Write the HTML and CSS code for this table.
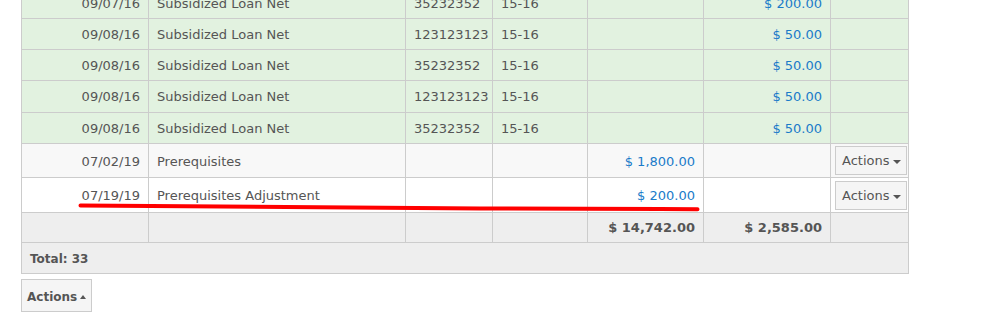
FILE: index.html
```html
<!DOCTYPE html>
<html>
<head>
<meta charset="utf-8">
<link rel="stylesheet" href="styles.css">
</head>
<body>
<div class="page">
  <table class="ledger">
    <colgroup>
      <col class="c-date"><col class="c-desc"><col class="c-ref"><col class="c-term"><col class="c-charge"><col class="c-pay"><col class="c-act">
    </colgroup>
    <tbody>
      <tr class="paid">
        <td class="r">09/07/16</td><td>Subsidized Loan Net</td><td>35232352</td><td>15-16</td><td></td><td class="r amt">$ 200.00</td><td></td>
      </tr>
      <tr class="paid">
        <td class="r">09/08/16</td><td>Subsidized Loan Net</td><td>123123123</td><td>15-16</td><td></td><td class="r amt">$ 50.00</td><td></td>
      </tr>
      <tr class="paid">
        <td class="r">09/08/16</td><td>Subsidized Loan Net</td><td>35232352</td><td>15-16</td><td></td><td class="r amt">$ 50.00</td><td></td>
      </tr>
      <tr class="paid tall">
        <td class="r">09/08/16</td><td>Subsidized Loan Net</td><td>123123123</td><td>15-16</td><td></td><td class="r amt">$ 50.00</td><td></td>
      </tr>
      <tr class="paid">
        <td class="r">09/08/16</td><td>Subsidized Loan Net</td><td>35232352</td><td>15-16</td><td></td><td class="r amt">$ 50.00</td><td></td>
      </tr>
      <tr class="charge odd">
        <td class="r">07/02/19</td><td>Prerequisites</td><td></td><td></td><td class="r amt">$ 1,800.00</td><td></td>
        <td class="act"><button class="btn">Actions<span class="caret"></span></button></td>
      </tr>
      <tr class="charge even">
        <td class="r">07/19/19</td><td>Prerequisites Adjustment</td><td></td><td></td><td class="r amt">$ 200.00</td><td></td>
        <td class="act"><button class="btn">Actions<span class="caret"></span></button></td>
      </tr>
      <tr class="totals">
        <td></td><td></td><td></td><td></td><td class="r">$ 14,742.00</td><td class="r">$ 2,585.00</td><td></td>
      </tr>
      <tr class="count">
        <td colspan="7">Total: 33</td>
      </tr>
    </tbody>
  </table>
  <button class="btn btn-bulk">Actions<span class="caret up"></span></button>
  <svg class="mark" width="994" height="333" viewBox="0 0 994 333" aria-hidden="true">
    <path d="M80.5 205.6 C 200 207.2, 330 208.2, 480 208.4 S 640 209.2, 697.5 209.2" fill="none" stroke="#ff0000" stroke-width="4" stroke-linecap="round"/>
  </svg>
</div>
</body>
</html>
```
FILE: styles.css
```css
html, body {
  margin: 0;
  padding: 0;
  background: #fff;
}
body {
  font-family: "DejaVu Sans", Verdana, sans-serif;
  font-size: 13px;
  color: #555;
  overflow: hidden;
}
.page {
  display: flow-root;
  position: relative;
  padding-left: 21px;
  height: 333px;
}
.ledger {
  border-collapse: collapse;
  table-layout: fixed;
  width: 888px;
  margin-top: -13px;
}
.c-date { width: 127px; }
.c-desc { width: 257px; }
.c-ref { width: 87px; }
.c-term { width: 95px; }
.c-charge { width: 116px; }
.c-pay { width: 127px; }
.c-act { width: 78px; }

.ledger td {
  border: 1px solid #cccccc;
  padding: 5px 8px;
  line-height: 20px;
  height: 20px;
  white-space: nowrap;
  overflow: hidden;
}
.ledger td.r { text-align: right; }
.ledger .amt { color: #1a7bc9; }
.paid td { background: #e2f2e0; }
.paid td { padding-top: 6px; padding-bottom: 4px; }
.paid.tall td { padding-bottom: 5px; }
.charge.odd td { background: #f8f8f8; }
.charge.even td { background: #ffffff; }
.charge td { padding-top: 8px; padding-bottom: 5px; }
.charge.even td { padding-bottom: 6px; }
.charge td.act { padding: 2px 2px 2px 4px; }
.charge.even td.act { padding-top: 3px; }
.totals td {
  background: #eeeeee;
  font-weight: bold;
  padding-top: 5px;
  padding-bottom: 4px;
}
.count td {
  background: #eeeeee;
  font-weight: bold;
  font-size: 12px;
  padding-top: 6px;
  padding-bottom: 4px;
}

.btn {
  font-family: inherit;
  font-size: 13px;
  color: #555;
  background: #f5f5f5;
  border: 1px solid #cccccc;
  border-radius: 0;
  margin: 0;
  padding: 4px 5px 3px 6px;
  line-height: 20px;
  height: 29px;
  display: inline-flex;
  align-items: center;
  white-space: nowrap;
}
.caret {
  display: inline-block;
  width: 0;
  height: 0;
  margin-left: 3px;
  margin-top: 2px;
  border-left: 4px solid transparent;
  border-right: 4px solid transparent;
  border-top: 4px solid #555;
}
.caret.up {
  border-top: 0;
  border-bottom: 4px solid #555;
  margin-top: 0;
  border-left-width: 3px;
  border-right-width: 3px;
}
.btn-bulk {
  margin-top: 5px;
  height: 33px;
  width: 71px;
  padding: 7px 5px 4px 5px;
  font-weight: bold;
  font-size: 12px;
}
.mark {
  position: absolute;
  left: 0;
  top: 0;
  pointer-events: none;
}
```
